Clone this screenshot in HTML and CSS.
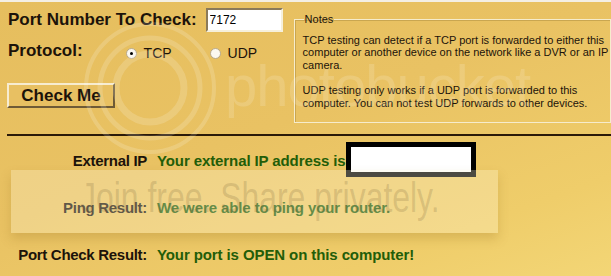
FILE: index.html
```html
<!DOCTYPE html>
<html lang="en">

<head>
  <meta charset="UTF-8">
  <title>Port Check</title>
  <link rel="stylesheet" href="styles.css">
</head>

<body>
  <div class="window">
    <div class="top">
      <div class="form">
        <div class="form-row">
          <label class="big-label">Port Number To Check:</label>
          <input class="port-input" type="text" value="7172">
        </div>
        <div class="form-row">
          <label class="big-label">Protocol:</label>
          <div class="radios">
            <span class="radio"><span class="dot checked"></span>TCP</span>
            <span class="radio"><span class="dot"></span>UDP</span>
          </div>
        </div>
        <div class="form-row">
          <button class="check-btn">Check Me</button>
        </div>
      </div>

      <fieldset class="notes">
        <legend>Notes</legend>
        <p>TCP testing can detect if a TCP port is forwarded to either this<br>computer or another device on the network like a DVR or an IP<br>camera.</p>
        <p>UDP testing only works if a UDP port is forwarded to this<br>computer. You can not test UDP forwards to other devices.</p>
      </fieldset>
    </div>

    <div class="divider"></div>

    <div class="results">
      <div class="result-label">External IP</div>
      <div class="result-value">Your external IP address is<span class="ip-box"></span></div>

      <div class="result-label">Ping Result:</div>
      <div class="result-value">We were able to ping your router.</div>

      <div class="result-label">Port Check Result:</div>
      <div class="result-value">Your port is OPEN on this computer!</div>
    </div>

    <!-- hosting watermark laid over the screenshot -->
    <svg class="wm-logo" width="160" height="160" viewBox="0 0 160 160">
      <circle cx="80" cy="80" r="34" fill="none" stroke="#fff" stroke-width="7" />
      <circle cx="80" cy="80" r="50" fill="none" stroke="#fff" stroke-width="5" />
      <circle cx="80" cy="80" r="64" fill="none" stroke="#fff" stroke-width="4" />
    </svg>
    <div class="wm-name">photobucket</div>
    <div class="wm-band"><span>Join free. Share privately.</span></div>
  </div>
</body>

</html>
```

FILE: styles.css
```css
* {
  margin: 0;
  padding: 0;
  box-sizing: border-box;
}

body {
  width: 611px;
  height: 276px;
  overflow: hidden;
  font-family: 'Liberation Sans', Arial, sans-serif;
  color: #1c130a;
}

.window {
  position: relative;
  width: 611px;
  height: 276px;
  border-top: 2px solid #f4efe4;
  background: linear-gradient(160deg, #e6be5e 0%, #e9c263 45%, #efcd6a 80%, #f3d676 100%);
}

.top {
  display: flex;
  padding: 5px 4px 0 7px;
  height: 132px;
}

.form {
  width: 288px;
}

.form-row {
  display: flex;
  align-items: center;
}

.form-row:nth-child(1) {
  height: 26px;
}

.form-row:nth-child(2) {
  height: 32px;
  margin-top: 2px;
}

.form-row:nth-child(3) {
  margin-top: 16px;
}

.big-label {
  font-size: 17px;
  font-weight: bold;
  padding-left: 1px;
}

.port-input {
  margin-left: 9px;
  width: 77px;
  height: 24px;
  border: 2px solid;
  border-color: #8a7a5a #f6f0dc #f6f0dc #8a7a5a;
  background: #fff;
  font-family: 'Liberation Sans', Arial, sans-serif;
  font-size: 12px;
  padding: 0 2px;
  color: #000;
}

.radios {
  display: flex;
  margin-left: 43px;
  margin-top: 4px;
}

.radio {
  display: flex;
  align-items: center;
  font-size: 14px;
  width: 84px;
}

.dot {
  width: 11px;
  height: 11px;
  border-radius: 50%;
  background: #fbf8f0;
  border: 1px solid #b8a98a;
  margin-right: 7px;
  position: relative;
}

.dot.checked::after {
  content: '';
  position: absolute;
  left: 3px;
  top: 3px;
  width: 3px;
  height: 3px;
  border-radius: 50%;
  background: #000;
}

.check-btn {
  width: 108px;
  height: 25px;
  font-family: 'Liberation Sans', Arial, sans-serif;
  font-size: 17px;
  font-weight: bold;
  color: #1c130a;
  background: #e8c062;
  border: 2px solid;
  border-color: #f7ecd0 #6e5a36 #6e5a36 #f7ecd0;
}

.notes {
  margin-top: 6px;
  width: 312px;
  height: 110px;
  border: 1px solid #f6eccc;
  box-shadow: inset 1px 1px 0 #c9a650;
  padding: 0 2px 0 8px;
  font-size: 11px;
  line-height: 12.5px;
  color: #1c130a;
  white-space: nowrap;
}

.notes legend {
  padding: 0 1px;
  margin-left: 1px;
}

.notes p {
  margin-top: 8px;
}

.notes p + p {
  margin-top: 13px;
}

.divider {
  margin-left: 7px;
  border-top: 2px solid #2b1a08;
}

.results {
  display: grid;
  grid-template-columns: 147px 1fr;
  column-gap: 10px;
  grid-auto-rows: 47px;
  padding-top: 1px;
  align-items: center;
}

.result-label {
  text-align: right;
  font-weight: bold;
  font-size: 15px;
  letter-spacing: -0.3px;
  color: #1c130a;
}

.result-value {
  display: flex;
  align-items: center;
  font-weight: bold;
  font-size: 15px;
  letter-spacing: -0.1px;
  color: #235d08;
}

.ip-box {
  width: 130px;
  height: 35px;
  border: 5px solid #000;
  background: #fff;
  margin-top: -2px;
}

.wm-logo {
  position: absolute;
  left: 70px;
  top: 6px;
  opacity: 0.16;
}

.wm-name {
  position: absolute;
  left: 225px;
  top: 50px;
  font-size: 58px;
  color: #fff;
  opacity: 0.15;
  letter-spacing: -1px;
}

.wm-band {
  position: absolute;
  left: 11px;
  top: 168px;
  width: 487px;
  height: 63px;
  background: rgba(255, 248, 220, 0.3);
  box-shadow: 0 6px 10px rgba(150, 110, 30, 0.25);
}

.wm-band span {
  position: absolute;
  left: 69px;
  top: 4px;
  font-size: 42px;
  color: rgba(110, 90, 50, 0.2);
  white-space: nowrap;
  transform: scaleX(0.76);
  transform-origin: left center;
}
```
